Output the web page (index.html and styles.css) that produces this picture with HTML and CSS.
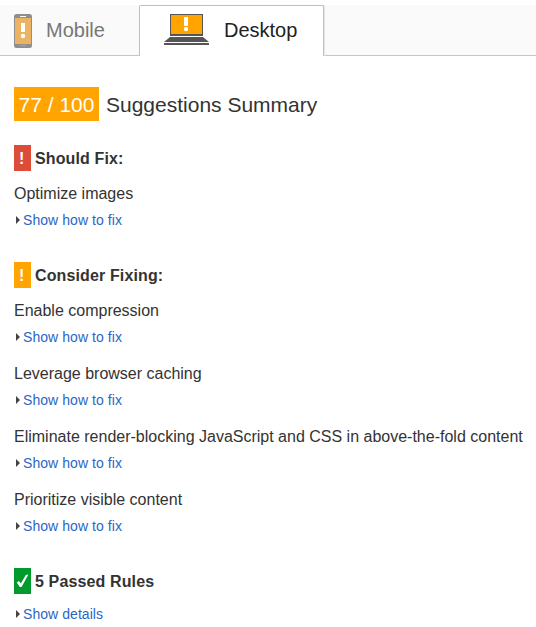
FILE: index.html
```html
<!DOCTYPE html>
<html>
    <head>
        <meta charset="utf-8">
        <title>PageSpeed Insights</title>
        <link rel="stylesheet" href="styles.css">
    </head>

<body>
    <div class="tabs">
        <div class="tab mobile">
            <svg width="18" height="34" viewBox="0 0 18 34">
                <rect width="18" height="34" rx="2.5" fill="#8f8f8f"/>
                <rect x="1" y="4" width="16" height="26" fill="#ecb365"/>
                <rect x="6" y="2" width="6" height="1" fill="#fff"/>
                <rect x="6" y="31" width="6" height="1" rx="0.5" fill="#a5a5a5"/>
                <rect x="7" y="9" width="4" height="9" fill="#fff"/>
                <circle cx="9" cy="22" r="2.2" fill="#fff"/>
            </svg>
            <span>Mobile</span>
        </div>
        <div class="tab desktop">
            <svg width="46" height="31" viewBox="0 0 46 31">
                <rect x="6" width="33" height="22" fill="#555"/>
                <rect x="7" y="1" width="31" height="19" fill="#ffa400"/>
                <path d="M6 23H39L45 28H0Z" fill="#555"/>
                <rect y="29" width="45" height="2" fill="#555"/>
                <rect x="20" y="3" width="4" height="9" fill="#fff"/>
                <circle cx="22" cy="15" r="2.2" fill="#fff"/>
            </svg>
            <span>Desktop</span>
        </div>
    </div>

    <div class="results">
        <h1><span class="score">77 / 100</span>Suggestions Summary</h1>

        <div class="group">
            <h2><span class="badge red">!</span>Should Fix:</h2>
            <div class="rule">
                <p>Optimize images</p>
                <a class="toggle">Show how to fix</a>
            </div>
        </div>

        <div class="group">
            <h2><span class="badge orange">!</span>Consider Fixing:</h2>
            <div class="rule">
                <p>Enable compression</p>
                <a class="toggle">Show how to fix</a>
            </div>
            <div class="rule">
                <p>Leverage browser caching</p>
                <a class="toggle">Show how to fix</a>
            </div>
            <div class="rule">
                <p>Eliminate render-blocking JavaScript and CSS in above-the-fold content</p>
                <a class="toggle">Show how to fix</a>
            </div>
            <div class="rule">
                <p>Prioritize visible content</p>
                <a class="toggle">Show how to fix</a>
            </div>
        </div>

        <div class="group passed">
            <h2>
                <span class="badge green">
                    <svg width="13" height="14" viewBox="0 0 13 14">
                        <path d="M0.8 8.4L3 7L4.8 9.6L9.8 1L12.4 0.4L5.6 13H3.8Z" fill="#fff"/>
                    </svg>
                </span>5 Passed Rules
            </h2>
            <a class="toggle">Show details</a>
        </div>
    </div>
</body>
</html>
```

FILE: styles.css
```css
body{
    margin: 0;
    background: #fff;
    color: #333;
    font-family: "Liberation Sans", Arial, sans-serif;
    font-size: 16px;
    overflow: hidden;
}

/* tabs */
.tabs{
    display: flex;
    height: 51px;
    margin-top: 5px;
    background: #fafafa;
    box-shadow: inset 0 -1px #c6c6c6;
}
.tab{
    display: flex;
    box-sizing: border-box;
    font-size: 20px;
    line-height: 50px;
}
.mobile{
    width: 139px;
    padding-left: 14px;
    color: #777;
}
.mobile svg{
    margin: 9px 14px 0 0;
}
.desktop{
    width: 185px;
    padding-left: 24px;
    border: 1px solid #c0c0c0;
    border-bottom: 0;
    border-radius: 2px 2px 0 0;
    background: #fff;
    color: #222;
    line-height: 48px;
    box-shadow: 1px 0 1px #e5e5e5;
}
.desktop svg{
    margin: 8px 14px 0 0;
}

/* results */
.results{
    padding: 31px 0 0 14px;
}
h1, h2, p{
    margin: 0;
}
h1{
    display: flex;
    height: 34px;
    font-size: 21px;
    font-weight: normal;
    line-height: 36px;
}
.score{
    box-sizing: border-box;
    width: 85px;
    margin-right: 7px;
    background: #ffa400;
    color: #fff;
    text-align: center;
}
.group{
    margin-top: 32px;
}
h1 + .group{
    margin-top: 24px;
}
h2{
    display: flex;
    height: 26px;
    margin-bottom: 12px;
    font-size: 16px;
    line-height: 28px;
    letter-spacing: 0.13px;
}
.badge{
    box-sizing: border-box;
    width: 17px;
    height: 26px;
    margin-right: 4px;
    padding-left: 5px;
    color: #fff;
}
.red{
    background: #dd4b39;
}
.orange{
    background: #ffa400;
}
.green{
    padding-left: 2px;
    background: #009a2d;
}
.green svg{
    display: block;
    margin-top: 6px;
}
.rule + .rule{
    margin-top: 16px;
}
.rule p{
    line-height: 22px;
    margin-bottom: 5px;
    white-space: nowrap;
}
.toggle{
    display: flex;
    align-items: center;
    color: #2a66c8;
    font-size: 14px;
    line-height: 20px;
    letter-spacing: 0.06px;
}
.toggle:before{
    content: "";
    margin: 0 3px 0 2px;
    border-left: 4px solid #444;
    border-top: 4px solid transparent;
    border-bottom: 4px solid transparent;
}
.passed h2{
    margin-bottom: 10px;
}
```
